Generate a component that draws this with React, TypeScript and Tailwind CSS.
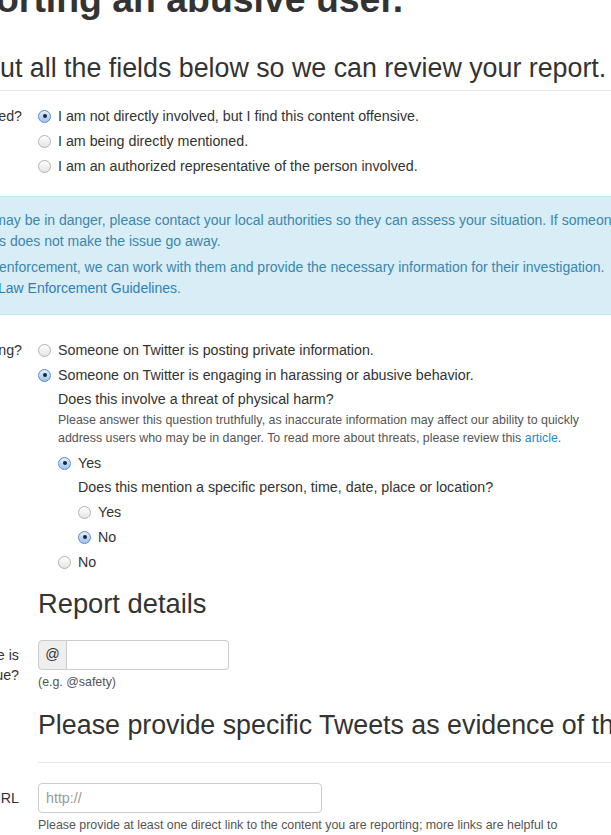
import React from 'react';

/**
 * Cropped view of the "report an abusive user" form.
 * The page runs off the left and right edges, so leading text
 * is kept in <Hidden> spans that sit just left of the visible start.
 */

function Hidden({ children }: { children: React.ReactNode }) {
  return (
    <span className="inline-block w-[700px] -ml-[700px] text-right">{children}</span>
  );
}

function Radio({ checked = false }: { checked?: boolean }) {
  return (
    <span
      className={`flex h-[13px] w-[13px] shrink-0 items-center justify-center rounded-full border ${
        checked
          ? 'border-[#5a8cc8] bg-linear-to-b from-[#e2eefc] to-[#9cc4f0]'
          : 'border-[#b2b2b2] bg-linear-to-b from-white to-[#e4e4e4]'
      }`}
    >
      {checked && <span className="h-[4px] w-[4px] rounded-full bg-[#1c2633]" />}
    </span>
  );
}

function Option({ checked = false, children }: { checked?: boolean; children: React.ReactNode }) {
  return (
    <div className="flex h-[20px] items-center gap-[7px] leading-[20px]">
      <Radio checked={checked} />
      <span className="whitespace-nowrap">{children}</span>
    </div>
  );
}

export default function App() {
  return (
    <div className="h-[835px] w-[611px] overflow-hidden bg-white font-['Liberation_Sans',Arial,sans-serif] text-[14.25px] text-[#333]">
      {/* Title */}
      <h1 className="-mt-[21px] -ml-[4px] whitespace-nowrap text-[37.4px] font-bold leading-[40px]">
        <Hidden>Rep</Hidden>orting an abusive user.
      </h1>
      <h2 className="mt-[33px] whitespace-nowrap border-b border-[#e8e8e8] pb-[6px] text-[26.8px] font-light leading-[32px]">
        <Hidden>Please fill o</Hidden>ut all the fields below so we can review your report.
      </h2>

      {/* How are you involved */}
      <div className="mt-[15px] flex">
        <div className="-ml-[178px] w-[200px] shrink-0 whitespace-nowrap text-right leading-[20px]">
          How are you involved?
        </div>
        <div className="ml-[16px] flex flex-col gap-[5px]">
          <Option checked>I am not directly involved, but I find this content offensive.</Option>
          <Option>I am being directly mentioned.</Option>
          <Option>I am an authorized representative of the person involved.</Option>
        </div>
      </div>

      {/* Info alert */}
      <div className="mt-[20px] -ml-[4px] w-[720px] border border-[#bce8f1] bg-[#d9edf7] pt-[13px] pb-[15px] text-[14px] leading-[21px] text-[#3a87ad]">
        <div className="mb-[5px]">
          <div className="ml-[9px] whitespace-nowrap">
            <Hidden>If you believe that you or someone else m</Hidden>ay be in danger, please contact your local authorities so they can assess your situation. If someone is threatening you,
          </div>
          <div className="ml-[2px] whitespace-nowrap">
            <Hidden>Blocking them or deleting your Tweet</Hidden>s does not make the issue go away.
          </div>
        </div>
        <div>
          <div className="ml-[2px] whitespace-nowrap">
            <Hidden>If you contact law </Hidden>enforcement, we can work with them and provide the necessary information for their investigation.{' '}
            <span className="ml-[6px]">For more</span>
          </div>
          <div className="ml-[1px] whitespace-nowrap">
            <Hidden>information, please review our </Hidden>
            <a className="text-[#2f7fb6]">Law Enforcement Guidelines</a>.
          </div>
        </div>
      </div>

      {/* What is happening */}
      <div className="mt-[25px] flex">
        <div className="-ml-[178px] w-[200px] shrink-0 whitespace-nowrap text-right leading-[20px]">
          What are you reporting?
        </div>
        <div className="ml-[16px] flex flex-col">
          <Option>Someone on Twitter is posting private information.</Option>
          <div className="mt-[5px]">
            <Option checked>Someone on Twitter is engaging in harassing or abusive behavior.</Option>
          </div>
          <div className="ml-[20px]">
            <p className="mt-[4px] whitespace-nowrap leading-[20px]">Does this involve a threat of physical harm?</p>
            <p className="mt-[2px] whitespace-nowrap text-[12.4px] leading-[18px] text-[#555]">
              Please answer this question truthfully, as inaccurate information may affect our ability to quickly
              <br />
              address users who may be in danger. To read more about threats, please review this{' '}
              <a className="text-[#2a8bc9]">article</a>.
            </p>
            <div className="mt-[6px]">
              <Option checked>Yes</Option>
            </div>
            <div className="ml-[20px]">
              <p className="mt-[4px] whitespace-nowrap leading-[20px]">
                Does this mention a specific person, time, date, place or location?
              </p>
              <div className="mt-[5px] flex flex-col gap-[5px]">
                <Option>Yes</Option>
                <Option checked>No</Option>
              </div>
            </div>
            <div className="mt-[5px]">
              <Option>No</Option>
            </div>
          </div>
        </div>
      </div>

      {/* Report details */}
      <h3 className="mt-[16px] ml-[38px] text-[27.3px] font-light leading-[32px]">Report details</h3>

      <div className="mt-[20px] flex">
        <div className="-ml-[181px] w-[200px] shrink-0 whitespace-nowrap pt-[5px] text-right leading-[20px]">
          Which Twitter username is
          <br />
          causing the issue?
        </div>
        <div className="ml-[19px]">
          <div className="flex h-[30px] w-[191px]">
            <span className="flex w-[29px] shrink-0 items-center justify-center rounded-l-[4px] border border-[#ccc] bg-[#eee]">
              @
            </span>
            <input
              type="text"
              className="w-[162px] rounded-r-[4px] border border-l-0 border-[#ccc] bg-white px-[6px] outline-none"
            />
          </div>
          <p className="mt-[3px] text-[12.4px] leading-[18px] text-[#555]">(e.g. @safety)</p>
        </div>
      </div>

      {/* Evidence */}
      <h3 className="mt-[18px] ml-[38px] whitespace-nowrap border-b border-[#e5e5e5] pb-[21px] text-[26.8px] font-light leading-[32px]">
        Please provide specific Tweets as evidence of the issue
      </h3>

      <div className="mt-[20px] flex">
        <div className="-ml-[181px] w-[200px] shrink-0 whitespace-nowrap pt-[5px] text-right leading-[20px]">
          Tweet URL
        </div>
        <div className="ml-[19px]">
          <input
            type="text"
            placeholder="http://"
            className="h-[30px] w-[284px] rounded-[4px] border border-[#ccc] bg-white px-[7px] outline-none placeholder:text-[#999]"
          />
          <p className="mt-[3px] whitespace-nowrap text-[12.4px] leading-[18px] text-[#555]">
            Please provide at least one direct link to the content you are reporting; more links are helpful to
            <br />
            our investigation.
          </p>
        </div>
      </div>
    </div>
  );
}
